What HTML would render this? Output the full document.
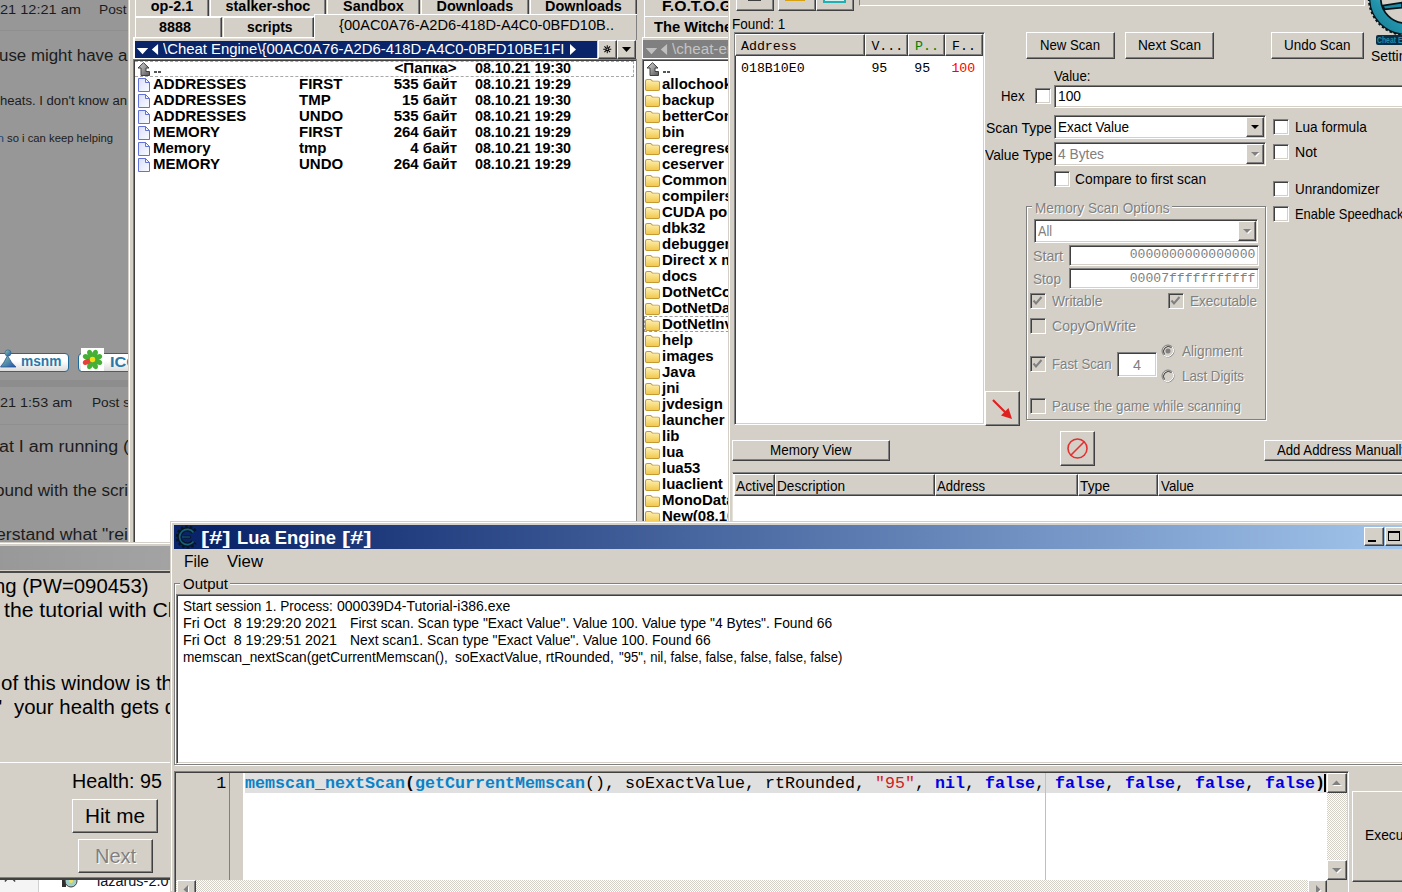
<!DOCTYPE html>
<html><head><meta charset="utf-8"><title>screenshot</title>
<style>
html,body{margin:0;padding:0}
body{width:1402px;height:892px;overflow:hidden;position:relative;background:#d4d0c8;font-family:"Liberation Sans",sans-serif;color:#000}
div{position:absolute;box-sizing:border-box}
.t{position:absolute;white-space:pre;display:block}
.s{font-family:"Liberation Sans",sans-serif}
.f{font-family:"Liberation Serif",serif}
.m{font-family:"Liberation Mono",monospace}
.b{font-weight:bold}
.clip{overflow:hidden}
.face{background:#d4d0c8}
.white{background:#fff}
.raised{background:#d4d0c8;border:1px solid;border-color:#fff #404040 #404040 #fff;box-shadow:inset -1px -1px 0 #808080,inset 1px 1px 0 #d4d0c8}
.sunken{border:1px solid;border-color:#808080 #fff #fff #808080;box-shadow:inset 1px 1px 0 #404040,inset -1px -1px 0 #d4d0c8}
.sunkw{background:#fff}
.cb{background:#fff;border:1px solid;border-color:#808080 #fff #fff #808080;box-shadow:inset 1px 1px 0 #404040,inset -1px -1px 0 #d4d0c8}
.cbd{background:#d4d0c8}
.dis{color:#808080;text-shadow:1px 1px 0 #fff}
.grp{border:1px solid #808080;box-shadow:1px 1px 0 #fff,inset 1px 1px 0 #fff}
.hdr{background:#d4d0c8;border:1px solid;border-color:#fff #404040 #404040 #fff;box-shadow:inset -1px -1px 0 #808080}
svg{position:absolute;overflow:visible}

</style></head>
<body>
<div class="clip" style="left:0;top:0;width:128px;height:542px;background:#979797;color:#1c1c1c">
<div style="left:0;top:30px;width:128px;height:1px;background:#8f8f8f"></div>
<div style="left:0;top:380px;width:128px;height:7px;background:#8d8d8d"></div>
<div style="left:0;top:424px;width:128px;height:1px;background:#8f8f8f"></div>
<span class="t s" style="top:4.23px;font-size:12.6px;line-height:12.6px;left:0.00px;transform:scaleX(1.1563);transform-origin:0 0;">21 12:21 am</span>
<span class="t s" style="top:4.23px;font-size:12.6px;line-height:12.6px;left:99.00px;transform:scaleX(1.0907);transform-origin:0 0;">Post</span>
<span class="t s" style="top:48.46px;font-size:16px;line-height:16px;left:-1.50px;transform:scaleX(1.0545);transform-origin:0 0;">use might have a</span>
<span class="t s" style="top:94.59px;font-size:12.3px;line-height:12.3px;left:0.00px;transform:scaleX(1.0647);transform-origin:0 0;">heats. I don't know an</span>
<span class="t s" style="top:133.36px;font-size:10.8px;line-height:10.8px;left:-3.00px;transform:scaleX(1.1654);transform-origin:0 0;color:#1d4a7a;">n</span>
<span class="t s" style="top:133.36px;font-size:10.8px;line-height:10.8px;left:7.00px;transform:scaleX(1.0446);transform-origin:0 0;">so i can keep helping</span>
<div style="left:-6px;top:353px;width:75px;height:19px;background:linear-gradient(#fff 40%,#dcdcdc);border:1.5px solid #1f6a9a;border-radius:4px"></div>
<svg style="left:0px;top:349px" width="17" height="19" viewBox="0 0 17 19"><defs><linearGradient id="mg" x1="0" y1="0" x2="1" y2="1"><stop offset="0" stop-color="#8fd0a0"/><stop offset="1" stop-color="#1f4fb0"/></linearGradient></defs><path d="M0.5 18 Q4 14 7.5 6.5 Q11 14 16 18 Z" fill="url(#mg)" stroke="#25579a" stroke-width="0.8"/><circle cx="8" cy="4" r="3.1" fill="url(#mg)" stroke="#2a5f8e" stroke-width="0.6"/></svg>
<span class="t s b" style="top:354.13px;font-size:14.5px;line-height:14.5px;left:21.30px;transform:scaleX(0.9460);transform-origin:0 0;color:#2a78a8;">msnm</span>
<div style="left:78px;top:353px;width:70px;height:19px;background:linear-gradient(#fff 40%,#dcdcdc);border:1.5px solid #1f6a9a;border-radius:4px"></div>
<div style="left:81px;top:348px;width:23px;height:23px;background:#fff"></div>
<svg style="left:81.7px;top:349px" width="21" height="21" viewBox="-10.5 -10.5 21 21"><g transform="rotate(22.5)"><g fill="#45b035"><g transform="rotate(0)"><ellipse cx="0" cy="-6.2" rx="2.7" ry="4.1"/></g><g transform="rotate(45)"><ellipse cx="0" cy="-6.2" rx="2.7" ry="4.1"/></g><g transform="rotate(90)"><ellipse cx="0" cy="-6.2" rx="2.7" ry="4.1"/></g><g transform="rotate(135)"><ellipse cx="0" cy="-6.2" rx="2.7" ry="4.1"/></g><g transform="rotate(180)"><ellipse cx="0" cy="-6.2" rx="2.7" ry="4.1"/></g><g transform="rotate(270)"><ellipse cx="0" cy="-6.2" rx="2.7" ry="4.1"/></g><g transform="rotate(315)"><ellipse cx="0" cy="-6.2" rx="2.7" ry="4.1"/></g></g><g transform="rotate(225)" fill="#e8403a"><ellipse cx="0" cy="-6.2" rx="2.7" ry="4.1"/></g></g><circle r="2.7" fill="#f7dc1a"/></svg>
<span class="t s b" style="top:354.73px;font-size:14.5px;line-height:14.5px;left:110.00px;transform:scaleX(1.1250);transform-origin:0 0;color:#2a78a8;">ICQ</span>
<span class="t s" style="top:396.93px;font-size:12.6px;line-height:12.6px;left:0.00px;transform:scaleX(1.1468);transform-origin:0 0;">21 1:53 am</span>
<span class="t s" style="top:396.93px;font-size:12.6px;line-height:12.6px;left:92.00px;transform:scaleX(1.0853);transform-origin:0 0;">Post s</span>
<span class="t s" style="top:439.46px;font-size:16px;line-height:16px;left:-0.70px;transform:scaleX(1.1159);transform-origin:0 0;">at I am running (</span>
<span class="t s" style="top:483.46px;font-size:16px;line-height:16px;left:-5.00px;transform:scaleX(1.0682);transform-origin:0 0;">ound with the scri</span>
<span class="t s" style="top:527.46px;font-size:16px;line-height:16px;left:-4.00px;transform:scaleX(1.1044);transform-origin:0 0;">erstand what "rei</span>
</div>
<div class="clip face" style="left:128px;top:0;width:602px;height:545px">
<div style="left:1px;top:0;width:1px;height:545px;background:#fff"></div>
<div style="left:7px;top:-6px;width:74px;height:22px;background:#d4d0c8;border-left:1px solid #fff;border-top:1px solid #fff;border-right:1px solid #404040;box-shadow:inset -1px 0 0 #808080"></div>
<span class="t s b" style="top:-1.39px;font-size:14.4px;line-height:14.4px;left:22.80px;">op-2.1</span>
<div style="left:82px;top:-6px;width:116px;height:22px;background:#d4d0c8;border-left:1px solid #fff;border-top:1px solid #fff;border-right:1px solid #404040;box-shadow:inset -1px 0 0 #808080"></div>
<span class="t s b" style="top:-1.39px;font-size:14.4px;line-height:14.4px;left:97.58px;">stalker-shoc</span>
<div style="left:199px;top:-6px;width:93px;height:22px;background:#d4d0c8;border-left:1px solid #fff;border-top:1px solid #fff;border-right:1px solid #404040;box-shadow:inset -1px 0 0 #808080"></div>
<span class="t s b" style="top:-1.39px;font-size:14.4px;line-height:14.4px;left:215.10px;">Sandbox</span>
<div style="left:293px;top:-6px;width:108px;height:22px;background:#d4d0c8;border-left:1px solid #fff;border-top:1px solid #fff;border-right:1px solid #404040;box-shadow:inset -1px 0 0 #808080"></div>
<span class="t s b" style="top:-1.39px;font-size:14.4px;line-height:14.4px;left:308.60px;">Downloads</span>
<div style="left:402px;top:-6px;width:107px;height:22px;background:#d4d0c8;border-left:1px solid #fff;border-top:1px solid #fff;border-right:1px solid #404040;box-shadow:inset -1px 0 0 #808080"></div>
<span class="t s b" style="top:-1.39px;font-size:14.4px;line-height:14.4px;left:417.10px;">Downloads</span>
<div style="left:7px;top:16px;width:502px;height:1px;background:#fff"></div>
<div style="left:7px;top:17px;width:87px;height:21px;background:#d4d0c8;border-left:1px solid #fff;border-top:1px solid #fff;border-right:1px solid #404040;box-shadow:inset -1px 0 0 #808080"></div>
<span class="t s b" style="top:19.30px;font-size:15px;line-height:15px;left:30.70px;transform:scaleX(0.9589);transform-origin:0 0;">8888</span>
<div style="left:95px;top:17px;width:91px;height:21px;background:#d4d0c8;border-left:1px solid #fff;border-top:1px solid #fff;border-right:1px solid #404040;box-shadow:inset -1px 0 0 #808080"></div>
<span class="t s b" style="top:19.30px;font-size:15px;line-height:15px;left:119.00px;transform:scaleX(0.9250);transform-origin:0 0;">scripts</span>
<div style="left:186px;top:14px;width:324px;height:26px;background:#d4d0c8;border-left:1px solid #fff;border-top:1px solid #fff;border-right:1px solid #404040;box-shadow:inset -1px 0 0 #808080"></div>
<span class="t s" style="top:17.30px;font-size:15px;line-height:15px;left:211.00px;transform:scaleX(0.9758);transform-origin:0 0;">{00AC0A76-A2D6-418D-A4C0-0BFD10B..</span>
<div style="left:5px;top:37px;width:182px;height:1px;background:#fff"></div>
<div style="left:5px;top:38px;width:182px;height:1px;background:#e6e3dd"></div>
<div style="left:5px;top:37px;width:2px;height:22px;background:#fff"></div>
<div style="left:5px;top:58px;width:465px;height:1px;background:#fff"></div>
<div style="left:7px;top:41px;width:462px;height:17px;background:#0a246a"></div>
<svg style="left:8px;top:41px" width="30" height="17" viewBox="0 0 30 17"><path d="M0.8 6.9 L12.2 6.9 L6.5 13.2 Z M15.8 8.5 L22.1 2.9 L22.1 14.1 Z" fill="#fff"/></svg>
<span class="t s" style="top:41.30px;font-size:15px;line-height:15px;left:35.20px;transform:scaleX(0.9928);transform-origin:0 0;color:#fff;">\Cheat Engine\{00AC0A76-A2D6-418D-A4C0-0BFD10BE1FI</span>
<svg style="left:440px;top:41px" width="12" height="17" viewBox="0 0 12 17"><path d="M2 3 L8 8.5 L2 14 Z" fill="#fff"/></svg>
<div class="raised" style="left:470px;top:40px;width:19px;height:19px"></div>
<svg style="left:475.29999999999995px;top:45.3px" width="8.5" height="8.5" viewBox="0 0 10 10"><path d="M5 0.3 L5 9.7 M0.3 5 L9.7 5 M1.7 1.7 L8.3 8.3 M8.3 1.7 L1.7 8.3" stroke="#000" stroke-width="1.2" fill="none"/><circle cx="5" cy="5" r="0.9" fill="#d4d0c8"/></svg>
<div class="raised" style="left:489px;top:40px;width:19px;height:19px"></div>
<svg style="left:489px;top:40px" width="19" height="19" viewBox="0 0 19 19"><path d="M5 7 L14 7 L9.5 12 Z" fill="#000"/></svg>
<div style="left:5px;top:59px;width:504px;height:490px;background:#fff;border:1px solid #808080;box-shadow:inset 1px 1px 0 #404040"></div>
<div style="left:7px;top:61px;width:499px;height:16px;border-top:1px dashed #a8a8a8;border-bottom:1px dashed #a8a8a8;border-right:1px dashed #a8a8a8"></div>
<svg style="left:9px;top:62px" width="14" height="14" viewBox="0 0 14 14"><defs><linearGradient id="ug" x1="0" y1="0" x2="1" y2="1"><stop offset="0" stop-color="#d8d8d8"/><stop offset="1" stop-color="#585858"/></linearGradient></defs><path d="M6.5 0.7 L12 6 L9 6 L9 9.5 L12.5 9.5 L12.5 13.5 L4 13.5 L4 6 L1 6 Z" fill="url(#ug)" stroke="#404040" stroke-width="1"/></svg>
<div style="left:26px;top:71px;width:3px;height:2px;background:#555"></div><div style="left:30.400000000000006px;top:71px;width:3px;height:2px;background:#555"></div>
<span class="t s b" style="top:60.30px;font-size:15px;line-height:15px;left:267.45px;transform:scaleX(1.0073);transform-origin:100% 0;">&lt;Папка&gt;</span>
<span class="t s b" style="top:60.30px;font-size:15px;line-height:15px;left:347.00px;transform:scaleX(0.9512);transform-origin:0 0;">08.10.21 19:30</span>
<svg style="left:10px;top:78px" width="12" height="14" viewBox="0 0 12 14"><defs><linearGradient id="fi" x1="0" y1="0" x2="1" y2="1"><stop offset="0" stop-color="#d9dffa"/><stop offset="1" stop-color="#fbfbff"/></linearGradient></defs><path d="M0.5 0.5 L7.5 0.5 L11.5 4.5 L11.5 13.5 L0.5 13.5 Z" fill="url(#fi)" stroke="#6272d8" stroke-width="1"/><path d="M7.5 0.5 L7.5 4.5 L11.5 4.5 Z" fill="#f4f6ff" stroke="#6272d8" stroke-width="1"/></svg>
<span class="t s b" style="top:76.30px;font-size:15px;line-height:15px;left:25.00px;">ADDRESSES</span>
<span class="t s b" style="top:76.30px;font-size:15px;line-height:15px;left:171.00px;">FIRST</span>
<span class="t s b" style="top:76.30px;font-size:15px;line-height:15px;left:265.63px;">535 байт</span>
<span class="t s b" style="top:76.30px;font-size:15px;line-height:15px;left:347.00px;transform:scaleX(0.9512);transform-origin:0 0;">08.10.21 19:29</span>
<svg style="left:10px;top:94px" width="12" height="14" viewBox="0 0 12 14"><defs><linearGradient id="fi" x1="0" y1="0" x2="1" y2="1"><stop offset="0" stop-color="#d9dffa"/><stop offset="1" stop-color="#fbfbff"/></linearGradient></defs><path d="M0.5 0.5 L7.5 0.5 L11.5 4.5 L11.5 13.5 L0.5 13.5 Z" fill="url(#fi)" stroke="#6272d8" stroke-width="1"/><path d="M7.5 0.5 L7.5 4.5 L11.5 4.5 Z" fill="#f4f6ff" stroke="#6272d8" stroke-width="1"/></svg>
<span class="t s b" style="top:92.30px;font-size:15px;line-height:15px;left:25.00px;">ADDRESSES</span>
<span class="t s b" style="top:92.30px;font-size:15px;line-height:15px;left:171.00px;">TMP</span>
<span class="t s b" style="top:92.30px;font-size:15px;line-height:15px;left:273.97px;">15 байт</span>
<span class="t s b" style="top:92.30px;font-size:15px;line-height:15px;left:347.00px;transform:scaleX(0.9512);transform-origin:0 0;">08.10.21 19:30</span>
<svg style="left:10px;top:110px" width="12" height="14" viewBox="0 0 12 14"><defs><linearGradient id="fi" x1="0" y1="0" x2="1" y2="1"><stop offset="0" stop-color="#d9dffa"/><stop offset="1" stop-color="#fbfbff"/></linearGradient></defs><path d="M0.5 0.5 L7.5 0.5 L11.5 4.5 L11.5 13.5 L0.5 13.5 Z" fill="url(#fi)" stroke="#6272d8" stroke-width="1"/><path d="M7.5 0.5 L7.5 4.5 L11.5 4.5 Z" fill="#f4f6ff" stroke="#6272d8" stroke-width="1"/></svg>
<span class="t s b" style="top:108.30px;font-size:15px;line-height:15px;left:25.00px;">ADDRESSES</span>
<span class="t s b" style="top:108.30px;font-size:15px;line-height:15px;left:171.00px;">UNDO</span>
<span class="t s b" style="top:108.30px;font-size:15px;line-height:15px;left:265.63px;">535 байт</span>
<span class="t s b" style="top:108.30px;font-size:15px;line-height:15px;left:347.00px;transform:scaleX(0.9512);transform-origin:0 0;">08.10.21 19:29</span>
<svg style="left:10px;top:126px" width="12" height="14" viewBox="0 0 12 14"><defs><linearGradient id="fi" x1="0" y1="0" x2="1" y2="1"><stop offset="0" stop-color="#d9dffa"/><stop offset="1" stop-color="#fbfbff"/></linearGradient></defs><path d="M0.5 0.5 L7.5 0.5 L11.5 4.5 L11.5 13.5 L0.5 13.5 Z" fill="url(#fi)" stroke="#6272d8" stroke-width="1"/><path d="M7.5 0.5 L7.5 4.5 L11.5 4.5 Z" fill="#f4f6ff" stroke="#6272d8" stroke-width="1"/></svg>
<span class="t s b" style="top:124.30px;font-size:15px;line-height:15px;left:25.00px;">MEMORY</span>
<span class="t s b" style="top:124.30px;font-size:15px;line-height:15px;left:171.00px;">FIRST</span>
<span class="t s b" style="top:124.30px;font-size:15px;line-height:15px;left:265.63px;">264 байт</span>
<span class="t s b" style="top:124.30px;font-size:15px;line-height:15px;left:347.00px;transform:scaleX(0.9512);transform-origin:0 0;">08.10.21 19:29</span>
<svg style="left:10px;top:142px" width="12" height="14" viewBox="0 0 12 14"><defs><linearGradient id="fi" x1="0" y1="0" x2="1" y2="1"><stop offset="0" stop-color="#d9dffa"/><stop offset="1" stop-color="#fbfbff"/></linearGradient></defs><path d="M0.5 0.5 L7.5 0.5 L11.5 4.5 L11.5 13.5 L0.5 13.5 Z" fill="url(#fi)" stroke="#6272d8" stroke-width="1"/><path d="M7.5 0.5 L7.5 4.5 L11.5 4.5 Z" fill="#f4f6ff" stroke="#6272d8" stroke-width="1"/></svg>
<span class="t s b" style="top:140.30px;font-size:15px;line-height:15px;left:25.00px;">Memory</span>
<span class="t s b" style="top:140.30px;font-size:15px;line-height:15px;left:171.00px;">tmp</span>
<span class="t s b" style="top:140.30px;font-size:15px;line-height:15px;left:282.31px;">4 байт</span>
<span class="t s b" style="top:140.30px;font-size:15px;line-height:15px;left:347.00px;transform:scaleX(0.9512);transform-origin:0 0;">08.10.21 19:30</span>
<svg style="left:10px;top:158px" width="12" height="14" viewBox="0 0 12 14"><defs><linearGradient id="fi" x1="0" y1="0" x2="1" y2="1"><stop offset="0" stop-color="#d9dffa"/><stop offset="1" stop-color="#fbfbff"/></linearGradient></defs><path d="M0.5 0.5 L7.5 0.5 L11.5 4.5 L11.5 13.5 L0.5 13.5 Z" fill="url(#fi)" stroke="#6272d8" stroke-width="1"/><path d="M7.5 0.5 L7.5 4.5 L11.5 4.5 Z" fill="#f4f6ff" stroke="#6272d8" stroke-width="1"/></svg>
<span class="t s b" style="top:156.30px;font-size:15px;line-height:15px;left:25.00px;">MEMORY</span>
<span class="t s b" style="top:156.30px;font-size:15px;line-height:15px;left:171.00px;">UNDO</span>
<span class="t s b" style="top:156.30px;font-size:15px;line-height:15px;left:265.63px;">264 байт</span>
<span class="t s b" style="top:156.30px;font-size:15px;line-height:15px;left:347.00px;transform:scaleX(0.9512);transform-origin:0 0;">08.10.21 19:29</span>
<div style="left:509px;top:0;width:6px;height:545px;background:#d4d0c8"></div>
<div style="left:514px;top:37px;width:100px;height:1px;background:#fff"></div>
<div style="left:514px;top:37px;width:1px;height:22px;background:#fff"></div>
<div style="left:514px;top:58px;width:100px;height:1px;background:#fff"></div>
<div style="left:516px;top:-6px;width:96px;height:22px;background:#d4d0c8;border-left:1px solid #fff;border-top:1px solid #fff;border-right:1px solid #404040;box-shadow:inset -1px 0 0 #808080"></div>
<span class="t s b" style="top:-1.70px;font-size:15px;line-height:15px;left:534.00px;transform:scaleX(1.0499);transform-origin:0 0;">F.O.T.O.G</span>
<div style="left:516px;top:16px;width:90px;height:1px;background:#fff"></div>
<div style="left:516px;top:17px;width:1px;height:21px;background:#fff"></div>
<span class="t s b" style="top:19.30px;font-size:15px;line-height:15px;left:526.00px;transform:scaleX(0.9801);transform-origin:0 0;">The Witcher</span>
<div style="left:515px;top:40px;width:90px;height:18px;background:#808080"></div>
<svg style="left:517px;top:41px" width="30" height="17" viewBox="0 0 30 17"><path d="M0.8 6.9 L12.2 6.9 L6.5 13.2 Z M15.8 8.5 L22.1 2.9 L22.1 14.1 Z" fill="#c0c0c0"/></svg>
<span class="t s" style="top:41.30px;font-size:15px;line-height:15px;left:544.00px;transform:scaleX(1.0121);transform-origin:0 0;color:#c4c4c4;">\cheat-engine</span>
<div style="left:514px;top:59px;width:100px;height:490px;background:#fff;border:1px solid #808080;box-shadow:inset 1px 1px 0 #404040"></div>
<svg style="left:518px;top:62px" width="14" height="14" viewBox="0 0 14 14"><defs><linearGradient id="ug" x1="0" y1="0" x2="1" y2="1"><stop offset="0" stop-color="#d8d8d8"/><stop offset="1" stop-color="#585858"/></linearGradient></defs><path d="M6.5 0.7 L12 6 L9 6 L9 9.5 L12.5 9.5 L12.5 13.5 L4 13.5 L4 6 L1 6 Z" fill="url(#ug)" stroke="#404040" stroke-width="1"/></svg>
<div style="left:535px;top:71px;width:3px;height:2px;background:#555"></div><div style="left:539.4px;top:71px;width:3px;height:2px;background:#555"></div>
<svg style="left:517.3px;top:78.5px" width="15" height="12" viewBox="0 0 16 14" preserveAspectRatio="none"><defs><linearGradient id="fg" x1="0" y1="0" x2="0" y2="1"><stop offset="0" stop-color="#fdf2b8"/><stop offset="1" stop-color="#f3c646"/></linearGradient></defs><path d="M0.5 2.5 Q0.5 0.5 2.5 0.5 L6 0.5 L8 2.5 L14 2.5 Q15.5 2.5 15.5 4 L15.5 12 Q15.5 13.5 14 13.5 L2 13.5 Q0.5 13.5 0.5 12 Z" fill="url(#fg)" stroke="#c39a35" stroke-width="1.1"/></svg>
<span class="t s b" style="top:76.30px;font-size:15px;line-height:15px;left:534.00px;">allochook</span>
<svg style="left:517.3px;top:94.5px" width="15" height="12" viewBox="0 0 16 14" preserveAspectRatio="none"><defs><linearGradient id="fg" x1="0" y1="0" x2="0" y2="1"><stop offset="0" stop-color="#fdf2b8"/><stop offset="1" stop-color="#f3c646"/></linearGradient></defs><path d="M0.5 2.5 Q0.5 0.5 2.5 0.5 L6 0.5 L8 2.5 L14 2.5 Q15.5 2.5 15.5 4 L15.5 12 Q15.5 13.5 14 13.5 L2 13.5 Q0.5 13.5 0.5 12 Z" fill="url(#fg)" stroke="#c39a35" stroke-width="1.1"/></svg>
<span class="t s b" style="top:92.30px;font-size:15px;line-height:15px;left:534.00px;">backup</span>
<svg style="left:517.3px;top:110.5px" width="15" height="12" viewBox="0 0 16 14" preserveAspectRatio="none"><defs><linearGradient id="fg" x1="0" y1="0" x2="0" y2="1"><stop offset="0" stop-color="#fdf2b8"/><stop offset="1" stop-color="#f3c646"/></linearGradient></defs><path d="M0.5 2.5 Q0.5 0.5 2.5 0.5 L6 0.5 L8 2.5 L14 2.5 Q15.5 2.5 15.5 4 L15.5 12 Q15.5 13.5 14 13.5 L2 13.5 Q0.5 13.5 0.5 12 Z" fill="url(#fg)" stroke="#c39a35" stroke-width="1.1"/></svg>
<span class="t s b" style="top:108.30px;font-size:15px;line-height:15px;left:534.00px;">betterCon</span>
<svg style="left:517.3px;top:126.5px" width="15" height="12" viewBox="0 0 16 14" preserveAspectRatio="none"><defs><linearGradient id="fg" x1="0" y1="0" x2="0" y2="1"><stop offset="0" stop-color="#fdf2b8"/><stop offset="1" stop-color="#f3c646"/></linearGradient></defs><path d="M0.5 2.5 Q0.5 0.5 2.5 0.5 L6 0.5 L8 2.5 L14 2.5 Q15.5 2.5 15.5 4 L15.5 12 Q15.5 13.5 14 13.5 L2 13.5 Q0.5 13.5 0.5 12 Z" fill="url(#fg)" stroke="#c39a35" stroke-width="1.1"/></svg>
<span class="t s b" style="top:124.30px;font-size:15px;line-height:15px;left:534.00px;">bin</span>
<svg style="left:517.3px;top:142.5px" width="15" height="12" viewBox="0 0 16 14" preserveAspectRatio="none"><defs><linearGradient id="fg" x1="0" y1="0" x2="0" y2="1"><stop offset="0" stop-color="#fdf2b8"/><stop offset="1" stop-color="#f3c646"/></linearGradient></defs><path d="M0.5 2.5 Q0.5 0.5 2.5 0.5 L6 0.5 L8 2.5 L14 2.5 Q15.5 2.5 15.5 4 L15.5 12 Q15.5 13.5 14 13.5 L2 13.5 Q0.5 13.5 0.5 12 Z" fill="url(#fg)" stroke="#c39a35" stroke-width="1.1"/></svg>
<span class="t s b" style="top:140.30px;font-size:15px;line-height:15px;left:534.00px;">ceregrese</span>
<svg style="left:517.3px;top:158.5px" width="15" height="12" viewBox="0 0 16 14" preserveAspectRatio="none"><defs><linearGradient id="fg" x1="0" y1="0" x2="0" y2="1"><stop offset="0" stop-color="#fdf2b8"/><stop offset="1" stop-color="#f3c646"/></linearGradient></defs><path d="M0.5 2.5 Q0.5 0.5 2.5 0.5 L6 0.5 L8 2.5 L14 2.5 Q15.5 2.5 15.5 4 L15.5 12 Q15.5 13.5 14 13.5 L2 13.5 Q0.5 13.5 0.5 12 Z" fill="url(#fg)" stroke="#c39a35" stroke-width="1.1"/></svg>
<span class="t s b" style="top:156.30px;font-size:15px;line-height:15px;left:534.00px;">ceserver</span>
<svg style="left:517.3px;top:174.5px" width="15" height="12" viewBox="0 0 16 14" preserveAspectRatio="none"><defs><linearGradient id="fg" x1="0" y1="0" x2="0" y2="1"><stop offset="0" stop-color="#fdf2b8"/><stop offset="1" stop-color="#f3c646"/></linearGradient></defs><path d="M0.5 2.5 Q0.5 0.5 2.5 0.5 L6 0.5 L8 2.5 L14 2.5 Q15.5 2.5 15.5 4 L15.5 12 Q15.5 13.5 14 13.5 L2 13.5 Q0.5 13.5 0.5 12 Z" fill="url(#fg)" stroke="#c39a35" stroke-width="1.1"/></svg>
<span class="t s b" style="top:172.30px;font-size:15px;line-height:15px;left:534.00px;">Common</span>
<svg style="left:517.3px;top:190.5px" width="15" height="12" viewBox="0 0 16 14" preserveAspectRatio="none"><defs><linearGradient id="fg" x1="0" y1="0" x2="0" y2="1"><stop offset="0" stop-color="#fdf2b8"/><stop offset="1" stop-color="#f3c646"/></linearGradient></defs><path d="M0.5 2.5 Q0.5 0.5 2.5 0.5 L6 0.5 L8 2.5 L14 2.5 Q15.5 2.5 15.5 4 L15.5 12 Q15.5 13.5 14 13.5 L2 13.5 Q0.5 13.5 0.5 12 Z" fill="url(#fg)" stroke="#c39a35" stroke-width="1.1"/></svg>
<span class="t s b" style="top:188.30px;font-size:15px;line-height:15px;left:534.00px;">compilers</span>
<svg style="left:517.3px;top:206.5px" width="15" height="12" viewBox="0 0 16 14" preserveAspectRatio="none"><defs><linearGradient id="fg" x1="0" y1="0" x2="0" y2="1"><stop offset="0" stop-color="#fdf2b8"/><stop offset="1" stop-color="#f3c646"/></linearGradient></defs><path d="M0.5 2.5 Q0.5 0.5 2.5 0.5 L6 0.5 L8 2.5 L14 2.5 Q15.5 2.5 15.5 4 L15.5 12 Q15.5 13.5 14 13.5 L2 13.5 Q0.5 13.5 0.5 12 Z" fill="url(#fg)" stroke="#c39a35" stroke-width="1.1"/></svg>
<span class="t s b" style="top:204.30px;font-size:15px;line-height:15px;left:534.00px;">CUDA poi</span>
<svg style="left:517.3px;top:222.5px" width="15" height="12" viewBox="0 0 16 14" preserveAspectRatio="none"><defs><linearGradient id="fg" x1="0" y1="0" x2="0" y2="1"><stop offset="0" stop-color="#fdf2b8"/><stop offset="1" stop-color="#f3c646"/></linearGradient></defs><path d="M0.5 2.5 Q0.5 0.5 2.5 0.5 L6 0.5 L8 2.5 L14 2.5 Q15.5 2.5 15.5 4 L15.5 12 Q15.5 13.5 14 13.5 L2 13.5 Q0.5 13.5 0.5 12 Z" fill="url(#fg)" stroke="#c39a35" stroke-width="1.1"/></svg>
<span class="t s b" style="top:220.30px;font-size:15px;line-height:15px;left:534.00px;">dbk32</span>
<svg style="left:517.3px;top:238.5px" width="15" height="12" viewBox="0 0 16 14" preserveAspectRatio="none"><defs><linearGradient id="fg" x1="0" y1="0" x2="0" y2="1"><stop offset="0" stop-color="#fdf2b8"/><stop offset="1" stop-color="#f3c646"/></linearGradient></defs><path d="M0.5 2.5 Q0.5 0.5 2.5 0.5 L6 0.5 L8 2.5 L14 2.5 Q15.5 2.5 15.5 4 L15.5 12 Q15.5 13.5 14 13.5 L2 13.5 Q0.5 13.5 0.5 12 Z" fill="url(#fg)" stroke="#c39a35" stroke-width="1.1"/></svg>
<span class="t s b" style="top:236.30px;font-size:15px;line-height:15px;left:534.00px;">debugger</span>
<svg style="left:517.3px;top:254.5px" width="15" height="12" viewBox="0 0 16 14" preserveAspectRatio="none"><defs><linearGradient id="fg" x1="0" y1="0" x2="0" y2="1"><stop offset="0" stop-color="#fdf2b8"/><stop offset="1" stop-color="#f3c646"/></linearGradient></defs><path d="M0.5 2.5 Q0.5 0.5 2.5 0.5 L6 0.5 L8 2.5 L14 2.5 Q15.5 2.5 15.5 4 L15.5 12 Q15.5 13.5 14 13.5 L2 13.5 Q0.5 13.5 0.5 12 Z" fill="url(#fg)" stroke="#c39a35" stroke-width="1.1"/></svg>
<span class="t s b" style="top:252.30px;font-size:15px;line-height:15px;left:534.00px;">Direct x m</span>
<svg style="left:517.3px;top:270.5px" width="15" height="12" viewBox="0 0 16 14" preserveAspectRatio="none"><defs><linearGradient id="fg" x1="0" y1="0" x2="0" y2="1"><stop offset="0" stop-color="#fdf2b8"/><stop offset="1" stop-color="#f3c646"/></linearGradient></defs><path d="M0.5 2.5 Q0.5 0.5 2.5 0.5 L6 0.5 L8 2.5 L14 2.5 Q15.5 2.5 15.5 4 L15.5 12 Q15.5 13.5 14 13.5 L2 13.5 Q0.5 13.5 0.5 12 Z" fill="url(#fg)" stroke="#c39a35" stroke-width="1.1"/></svg>
<span class="t s b" style="top:268.30px;font-size:15px;line-height:15px;left:534.00px;">docs</span>
<svg style="left:517.3px;top:286.5px" width="15" height="12" viewBox="0 0 16 14" preserveAspectRatio="none"><defs><linearGradient id="fg" x1="0" y1="0" x2="0" y2="1"><stop offset="0" stop-color="#fdf2b8"/><stop offset="1" stop-color="#f3c646"/></linearGradient></defs><path d="M0.5 2.5 Q0.5 0.5 2.5 0.5 L6 0.5 L8 2.5 L14 2.5 Q15.5 2.5 15.5 4 L15.5 12 Q15.5 13.5 14 13.5 L2 13.5 Q0.5 13.5 0.5 12 Z" fill="url(#fg)" stroke="#c39a35" stroke-width="1.1"/></svg>
<span class="t s b" style="top:284.30px;font-size:15px;line-height:15px;left:534.00px;">DotNetCo</span>
<svg style="left:517.3px;top:302.5px" width="15" height="12" viewBox="0 0 16 14" preserveAspectRatio="none"><defs><linearGradient id="fg" x1="0" y1="0" x2="0" y2="1"><stop offset="0" stop-color="#fdf2b8"/><stop offset="1" stop-color="#f3c646"/></linearGradient></defs><path d="M0.5 2.5 Q0.5 0.5 2.5 0.5 L6 0.5 L8 2.5 L14 2.5 Q15.5 2.5 15.5 4 L15.5 12 Q15.5 13.5 14 13.5 L2 13.5 Q0.5 13.5 0.5 12 Z" fill="url(#fg)" stroke="#c39a35" stroke-width="1.1"/></svg>
<span class="t s b" style="top:300.30px;font-size:15px;line-height:15px;left:534.00px;">DotNetDa</span>
<svg style="left:517.3px;top:318.5px" width="15" height="12" viewBox="0 0 16 14" preserveAspectRatio="none"><defs><linearGradient id="fg" x1="0" y1="0" x2="0" y2="1"><stop offset="0" stop-color="#fdf2b8"/><stop offset="1" stop-color="#f3c646"/></linearGradient></defs><path d="M0.5 2.5 Q0.5 0.5 2.5 0.5 L6 0.5 L8 2.5 L14 2.5 Q15.5 2.5 15.5 4 L15.5 12 Q15.5 13.5 14 13.5 L2 13.5 Q0.5 13.5 0.5 12 Z" fill="url(#fg)" stroke="#c39a35" stroke-width="1.1"/></svg>
<span class="t s b" style="top:316.30px;font-size:15px;line-height:15px;left:534.00px;">DotNetInv</span>
<svg style="left:517.3px;top:334.5px" width="15" height="12" viewBox="0 0 16 14" preserveAspectRatio="none"><defs><linearGradient id="fg" x1="0" y1="0" x2="0" y2="1"><stop offset="0" stop-color="#fdf2b8"/><stop offset="1" stop-color="#f3c646"/></linearGradient></defs><path d="M0.5 2.5 Q0.5 0.5 2.5 0.5 L6 0.5 L8 2.5 L14 2.5 Q15.5 2.5 15.5 4 L15.5 12 Q15.5 13.5 14 13.5 L2 13.5 Q0.5 13.5 0.5 12 Z" fill="url(#fg)" stroke="#c39a35" stroke-width="1.1"/></svg>
<span class="t s b" style="top:332.30px;font-size:15px;line-height:15px;left:534.00px;">help</span>
<svg style="left:517.3px;top:350.5px" width="15" height="12" viewBox="0 0 16 14" preserveAspectRatio="none"><defs><linearGradient id="fg" x1="0" y1="0" x2="0" y2="1"><stop offset="0" stop-color="#fdf2b8"/><stop offset="1" stop-color="#f3c646"/></linearGradient></defs><path d="M0.5 2.5 Q0.5 0.5 2.5 0.5 L6 0.5 L8 2.5 L14 2.5 Q15.5 2.5 15.5 4 L15.5 12 Q15.5 13.5 14 13.5 L2 13.5 Q0.5 13.5 0.5 12 Z" fill="url(#fg)" stroke="#c39a35" stroke-width="1.1"/></svg>
<span class="t s b" style="top:348.30px;font-size:15px;line-height:15px;left:534.00px;">images</span>
<svg style="left:517.3px;top:366.5px" width="15" height="12" viewBox="0 0 16 14" preserveAspectRatio="none"><defs><linearGradient id="fg" x1="0" y1="0" x2="0" y2="1"><stop offset="0" stop-color="#fdf2b8"/><stop offset="1" stop-color="#f3c646"/></linearGradient></defs><path d="M0.5 2.5 Q0.5 0.5 2.5 0.5 L6 0.5 L8 2.5 L14 2.5 Q15.5 2.5 15.5 4 L15.5 12 Q15.5 13.5 14 13.5 L2 13.5 Q0.5 13.5 0.5 12 Z" fill="url(#fg)" stroke="#c39a35" stroke-width="1.1"/></svg>
<span class="t s b" style="top:364.30px;font-size:15px;line-height:15px;left:534.00px;">Java</span>
<svg style="left:517.3px;top:382.5px" width="15" height="12" viewBox="0 0 16 14" preserveAspectRatio="none"><defs><linearGradient id="fg" x1="0" y1="0" x2="0" y2="1"><stop offset="0" stop-color="#fdf2b8"/><stop offset="1" stop-color="#f3c646"/></linearGradient></defs><path d="M0.5 2.5 Q0.5 0.5 2.5 0.5 L6 0.5 L8 2.5 L14 2.5 Q15.5 2.5 15.5 4 L15.5 12 Q15.5 13.5 14 13.5 L2 13.5 Q0.5 13.5 0.5 12 Z" fill="url(#fg)" stroke="#c39a35" stroke-width="1.1"/></svg>
<span class="t s b" style="top:380.30px;font-size:15px;line-height:15px;left:534.00px;">jni</span>
<svg style="left:517.3px;top:398.5px" width="15" height="12" viewBox="0 0 16 14" preserveAspectRatio="none"><defs><linearGradient id="fg" x1="0" y1="0" x2="0" y2="1"><stop offset="0" stop-color="#fdf2b8"/><stop offset="1" stop-color="#f3c646"/></linearGradient></defs><path d="M0.5 2.5 Q0.5 0.5 2.5 0.5 L6 0.5 L8 2.5 L14 2.5 Q15.5 2.5 15.5 4 L15.5 12 Q15.5 13.5 14 13.5 L2 13.5 Q0.5 13.5 0.5 12 Z" fill="url(#fg)" stroke="#c39a35" stroke-width="1.1"/></svg>
<span class="t s b" style="top:396.30px;font-size:15px;line-height:15px;left:534.00px;">jvdesign</span>
<svg style="left:517.3px;top:414.5px" width="15" height="12" viewBox="0 0 16 14" preserveAspectRatio="none"><defs><linearGradient id="fg" x1="0" y1="0" x2="0" y2="1"><stop offset="0" stop-color="#fdf2b8"/><stop offset="1" stop-color="#f3c646"/></linearGradient></defs><path d="M0.5 2.5 Q0.5 0.5 2.5 0.5 L6 0.5 L8 2.5 L14 2.5 Q15.5 2.5 15.5 4 L15.5 12 Q15.5 13.5 14 13.5 L2 13.5 Q0.5 13.5 0.5 12 Z" fill="url(#fg)" stroke="#c39a35" stroke-width="1.1"/></svg>
<span class="t s b" style="top:412.30px;font-size:15px;line-height:15px;left:534.00px;">launcher</span>
<svg style="left:517.3px;top:430.5px" width="15" height="12" viewBox="0 0 16 14" preserveAspectRatio="none"><defs><linearGradient id="fg" x1="0" y1="0" x2="0" y2="1"><stop offset="0" stop-color="#fdf2b8"/><stop offset="1" stop-color="#f3c646"/></linearGradient></defs><path d="M0.5 2.5 Q0.5 0.5 2.5 0.5 L6 0.5 L8 2.5 L14 2.5 Q15.5 2.5 15.5 4 L15.5 12 Q15.5 13.5 14 13.5 L2 13.5 Q0.5 13.5 0.5 12 Z" fill="url(#fg)" stroke="#c39a35" stroke-width="1.1"/></svg>
<span class="t s b" style="top:428.30px;font-size:15px;line-height:15px;left:534.00px;">lib</span>
<svg style="left:517.3px;top:446.5px" width="15" height="12" viewBox="0 0 16 14" preserveAspectRatio="none"><defs><linearGradient id="fg" x1="0" y1="0" x2="0" y2="1"><stop offset="0" stop-color="#fdf2b8"/><stop offset="1" stop-color="#f3c646"/></linearGradient></defs><path d="M0.5 2.5 Q0.5 0.5 2.5 0.5 L6 0.5 L8 2.5 L14 2.5 Q15.5 2.5 15.5 4 L15.5 12 Q15.5 13.5 14 13.5 L2 13.5 Q0.5 13.5 0.5 12 Z" fill="url(#fg)" stroke="#c39a35" stroke-width="1.1"/></svg>
<span class="t s b" style="top:444.30px;font-size:15px;line-height:15px;left:534.00px;">lua</span>
<svg style="left:517.3px;top:462.5px" width="15" height="12" viewBox="0 0 16 14" preserveAspectRatio="none"><defs><linearGradient id="fg" x1="0" y1="0" x2="0" y2="1"><stop offset="0" stop-color="#fdf2b8"/><stop offset="1" stop-color="#f3c646"/></linearGradient></defs><path d="M0.5 2.5 Q0.5 0.5 2.5 0.5 L6 0.5 L8 2.5 L14 2.5 Q15.5 2.5 15.5 4 L15.5 12 Q15.5 13.5 14 13.5 L2 13.5 Q0.5 13.5 0.5 12 Z" fill="url(#fg)" stroke="#c39a35" stroke-width="1.1"/></svg>
<span class="t s b" style="top:460.30px;font-size:15px;line-height:15px;left:534.00px;">lua53</span>
<svg style="left:517.3px;top:478.5px" width="15" height="12" viewBox="0 0 16 14" preserveAspectRatio="none"><defs><linearGradient id="fg" x1="0" y1="0" x2="0" y2="1"><stop offset="0" stop-color="#fdf2b8"/><stop offset="1" stop-color="#f3c646"/></linearGradient></defs><path d="M0.5 2.5 Q0.5 0.5 2.5 0.5 L6 0.5 L8 2.5 L14 2.5 Q15.5 2.5 15.5 4 L15.5 12 Q15.5 13.5 14 13.5 L2 13.5 Q0.5 13.5 0.5 12 Z" fill="url(#fg)" stroke="#c39a35" stroke-width="1.1"/></svg>
<span class="t s b" style="top:476.30px;font-size:15px;line-height:15px;left:534.00px;">luaclient</span>
<svg style="left:517.3px;top:494.5px" width="15" height="12" viewBox="0 0 16 14" preserveAspectRatio="none"><defs><linearGradient id="fg" x1="0" y1="0" x2="0" y2="1"><stop offset="0" stop-color="#fdf2b8"/><stop offset="1" stop-color="#f3c646"/></linearGradient></defs><path d="M0.5 2.5 Q0.5 0.5 2.5 0.5 L6 0.5 L8 2.5 L14 2.5 Q15.5 2.5 15.5 4 L15.5 12 Q15.5 13.5 14 13.5 L2 13.5 Q0.5 13.5 0.5 12 Z" fill="url(#fg)" stroke="#c39a35" stroke-width="1.1"/></svg>
<span class="t s b" style="top:492.30px;font-size:15px;line-height:15px;left:534.00px;">MonoData</span>
<svg style="left:517.3px;top:510.5px" width="15" height="12" viewBox="0 0 16 14" preserveAspectRatio="none"><defs><linearGradient id="fg" x1="0" y1="0" x2="0" y2="1"><stop offset="0" stop-color="#fdf2b8"/><stop offset="1" stop-color="#f3c646"/></linearGradient></defs><path d="M0.5 2.5 Q0.5 0.5 2.5 0.5 L6 0.5 L8 2.5 L14 2.5 Q15.5 2.5 15.5 4 L15.5 12 Q15.5 13.5 14 13.5 L2 13.5 Q0.5 13.5 0.5 12 Z" fill="url(#fg)" stroke="#c39a35" stroke-width="1.1"/></svg>
<span class="t s b" style="top:508.30px;font-size:15px;line-height:15px;left:534.00px;">New(08.10.</span>
<div style="left:516px;top:316px;width:90px;height:16px;border:1px dashed #9a9a9a;border-right:none"></div>
</div>
<div class="clip face" style="left:728px;top:0;width:674px;height:523px">
<div style="left:0;top:0;width:1px;height:523px;background:#d4d0c8"></div>
<div style="left:1px;top:0;width:1px;height:523px;background:#fff"></div>
<div class="raised" style="left:8px;top:-20px;width:38px;height:31px"></div>
<div style="left:20px;top:-6px;width:13px;height:7px;background:#404040"></div>
<div class="raised" style="left:50px;top:-20px;width:38px;height:31px"></div>
<div style="left:57px;top:-6px;width:20px;height:7px;background:#d6a212"></div>
<div class="raised" style="left:88px;top:-20px;width:38px;height:31px"></div>
<div style="left:95px;top:-7px;width:23px;height:10px;background:#d8f0f0;border:2px solid #20b0b0"></div>
<div style="left:131px;top:-20px;width:506px;height:26px;border-left:1px solid #808080;border-bottom:1px solid #fff;border-right:1px solid #fff"></div>
<span class="t s" style="top:16.30px;font-size:15px;line-height:15px;left:3.80px;transform:scaleX(0.8985);transform-origin:0 0;">Found: 1</span>
<div class="sunken sunkw" style="left:6px;top:32px;width:251px;height:393px"></div>
<div class="hdr" style="left:7px;top:34px;width:130px;height:22px"></div>
<span class="t m" style="top:40.14px;font-size:13.25px;line-height:13.25px;left:13.00px;color:#000;">Address</span>
<div class="hdr" style="left:137px;top:34px;width:43px;height:22px"></div>
<span class="t m" style="top:40.14px;font-size:13.25px;line-height:13.25px;left:143.40px;color:#000;">V...</span>
<div class="hdr" style="left:180px;top:34px;width:37px;height:22px"></div>
<span class="t m" style="top:40.14px;font-size:13.25px;line-height:13.25px;left:187.00px;color:#008000;">P..</span>
<div class="hdr" style="left:217px;top:34px;width:38px;height:22px"></div>
<span class="t m" style="top:40.14px;font-size:13.25px;line-height:13.25px;left:224.10px;color:#000;">F..</span>
<span class="t m" style="top:61.94px;font-size:13.25px;line-height:13.25px;left:13.00px;">018B10E0</span>
<span class="t m" style="top:61.94px;font-size:13.25px;line-height:13.25px;left:143.40px;">95</span>
<span class="t m" style="top:61.94px;font-size:13.25px;line-height:13.25px;left:186.30px;">95</span>
<span class="t m" style="top:61.94px;font-size:13.25px;line-height:13.25px;left:223.40px;color:#ff0000;">100</span>
<div class="raised" style="left:257px;top:391px;width:35px;height:35px"></div>
<svg style="left:257px;top:391px" width="35" height="35" viewBox="0 0 35 35"><path d="M8 9 L22 23" stroke="#e02020" stroke-width="2.2"/><path d="M27 28 L16 24.5 L23.5 17 Z" fill="#e02020"/></svg>
<div class="raised" style="left:298px;top:32px;width:89px;height:27px"></div>
<span class="t s" style="top:37.30px;font-size:15px;line-height:15px;left:312.00px;transform:scaleX(0.8776);transform-origin:0 0;">New Scan</span>
<div class="raised" style="left:397px;top:32px;width:89px;height:27px"></div>
<span class="t s" style="top:37.30px;font-size:15px;line-height:15px;left:410.00px;transform:scaleX(0.9104);transform-origin:0 0;">Next Scan</span>
<div class="raised" style="left:543px;top:32px;width:93px;height:27px"></div>
<span class="t s" style="top:37.30px;font-size:15px;line-height:15px;left:556.00px;transform:scaleX(0.8960);transform-origin:0 0;">Undo Scan</span>
<svg style="left:634px;top:0px" width="40" height="48" viewBox="1362 0 40 48"><defs><linearGradient id="lg" gradientUnits="userSpaceOnUse" x1="1370" y1="30" x2="1402" y2="-4"><stop offset="0" stop-color="#17788f"/><stop offset="0.5" stop-color="#2193ab"/><stop offset="1" stop-color="#52c4da"/></linearGradient></defs><circle cx="1406" cy="-2" r="36" fill="none" stroke="#04151c" stroke-width="4.4" stroke-dasharray="2.5 1.9"/><circle cx="1406" cy="-2" r="30.7" fill="none" stroke="#04151c" stroke-width="12.6"/><circle cx="1406" cy="-2" r="30.9" fill="none" stroke="url(#lg)" stroke-width="9.6"/><path d="M1382.6 5.6 L1402 2.6 L1402 7.6 L1384.7 9.4 Z" fill="#1c8aa2" stroke="#04151c" stroke-width="1.6"/></svg>
<div style="left:648px;top:35px;width:40px;height:10px;background:#0b2d44;border-radius:2px"></div>
<span class="t s b" style="top:35.36px;font-size:9.5px;line-height:9.5px;left:648.90px;transform:scaleX(0.7199);transform-origin:0 0;color:#1f8fa8;">Cheat Engine</span>
<span class="t s" style="top:48.00px;font-size:15px;line-height:15px;left:643.00px;transform:scaleX(0.9225);transform-origin:0 0;">Settings</span>
<span class="t s" style="top:67.80px;font-size:15px;line-height:15px;left:325.70px;transform:scaleX(0.8812);transform-origin:0 0;">Value:</span>
<span class="t s" style="top:88.30px;font-size:15px;line-height:15px;left:273.00px;transform:scaleX(0.8810);transform-origin:0 0;">Hex</span>
<div class="cb" style="left:307px;top:88px;width:16px;height:16px"></div>
<div class="sunken sunkw" style="left:326px;top:85px;width:400px;height:23px"></div>
<span class="t s" style="top:88.30px;font-size:15px;line-height:15px;left:330.00px;transform:scaleX(0.9190);transform-origin:0 0;">100</span>
<span class="t s" style="top:119.80px;font-size:15px;line-height:15px;left:258.30px;transform:scaleX(0.9333);transform-origin:0 0;">Scan Type</span>
<div class="sunken sunkw" style="left:326px;top:115px;width:212px;height:24px"></div>
<span class="t s" style="top:119.30px;font-size:15px;line-height:15px;left:330.00px;transform:scaleX(0.8995);transform-origin:0 0;">Exact Value</span>
<div class="raised" style="left:518px;top:117px;width:18px;height:20px"></div>
<svg style="left:518px;top:117px" width="18" height="20" viewBox="0 0 18 20"><path d="M5 8 L13 8 L9 12 Z" fill="#000"/></svg>
<span class="t s" style="top:146.80px;font-size:15px;line-height:15px;left:256.60px;transform:scaleX(0.9176);transform-origin:0 0;">Value Type</span>
<div class="sunken sunkw" style="left:326px;top:142px;width:212px;height:24px"></div>
<span class="t s" style="top:146.30px;font-size:15px;line-height:15px;left:330.00px;transform:scaleX(0.9195);transform-origin:0 0;color:#808080;">4 Bytes</span>
<div class="raised" style="left:518px;top:144px;width:18px;height:20px"></div>
<svg style="left:518px;top:144px" width="18" height="20" viewBox="0 0 18 20"><path d="M6 9 L14 9 L10 13 Z" fill="#fff"/><path d="M5 8 L13 8 L9 12 Z" fill="#808080"/></svg>
<div class="cb" style="left:326px;top:171px;width:16px;height:16px"></div>
<span class="t s" style="top:170.80px;font-size:15px;line-height:15px;left:347.30px;transform:scaleX(0.9204);transform-origin:0 0;">Compare to first scan</span>
<div class="cb" style="left:545px;top:119px;width:16px;height:16px"></div>
<span class="t s" style="top:118.80px;font-size:15px;line-height:15px;left:566.70px;transform:scaleX(0.9051);transform-origin:0 0;">Lua formula</span>
<div class="cb" style="left:545px;top:144px;width:16px;height:16px"></div>
<span class="t s" style="top:144.30px;font-size:15px;line-height:15px;left:566.70px;transform:scaleX(0.9382);transform-origin:0 0;">Not</span>
<div class="cb" style="left:545px;top:181px;width:16px;height:16px"></div>
<span class="t s" style="top:181.30px;font-size:15px;line-height:15px;left:566.70px;transform:scaleX(0.8959);transform-origin:0 0;">Unrandomizer</span>
<div class="cb" style="left:545px;top:206px;width:16px;height:16px"></div>
<span class="t s" style="top:206.30px;font-size:15px;line-height:15px;left:566.70px;transform:scaleX(0.8607);transform-origin:0 0;">Enable Speedhack</span>
<div class="grp" style="left:298px;top:206px;width:240px;height:214px"></div>
<div class="face" style="left:304px;top:200px;width:140px;height:15px"></div>
<span class="t s dis" style="top:200.30px;font-size:15px;line-height:15px;left:307.00px;transform:scaleX(0.9064);transform-origin:0 0;">Memory Scan Options</span>
<div class="sunken sunkw" style="left:306px;top:219px;width:224px;height:24px"></div>
<span class="t s" style="top:223.30px;font-size:15px;line-height:15px;left:310.00px;transform:scaleX(0.8398);transform-origin:0 0;color:#808080;">All</span>
<div class="raised" style="left:510px;top:221px;width:18px;height:20px"></div>
<svg style="left:510px;top:221px" width="18" height="20" viewBox="0 0 18 20"><path d="M6 9 L14 9 L10 13 Z" fill="#fff"/><path d="M5 8 L13 8 L9 12 Z" fill="#808080"/></svg>
<span class="t s dis" style="top:247.80px;font-size:15px;line-height:15px;left:305.00px;transform:scaleX(0.9470);transform-origin:0 0;">Start</span>
<div class="sunken sunkw" style="left:341px;top:245px;width:190px;height:21px"></div>
<span class="t m" style="top:248.46px;font-size:13.1px;line-height:13.1px;left:401.72px;color:#808080;">0000000000000000</span>
<span class="t s dis" style="top:271.30px;font-size:15px;line-height:15px;left:305.00px;transform:scaleX(0.9074);transform-origin:0 0;">Stop</span>
<div class="sunken sunkw" style="left:341px;top:268px;width:190px;height:21px"></div>
<span class="t m" style="top:271.96px;font-size:13.1px;line-height:13.1px;left:401.72px;color:#808080;">00007fffffffffff</span>
<div class="cb cbd" style="left:302px;top:293px;width:16px;height:16px"></div>
<svg style="left:302px;top:293px" width="16" height="16" viewBox="0 0 16 16"><path d="M3.5 7.5 L6 10.5 L11.5 4" fill="none" stroke="#808080" stroke-width="2"/></svg>
<span class="t s dis" style="top:293.30px;font-size:15px;line-height:15px;left:323.50px;transform:scaleX(0.9225);transform-origin:0 0;">Writable</span>
<div class="cb cbd" style="left:440px;top:293px;width:16px;height:16px"></div>
<svg style="left:440px;top:293px" width="16" height="16" viewBox="0 0 16 16"><path d="M3.5 7.5 L6 10.5 L11.5 4" fill="none" stroke="#808080" stroke-width="2"/></svg>
<span class="t s dis" style="top:293.30px;font-size:15px;line-height:15px;left:462.00px;transform:scaleX(0.9027);transform-origin:0 0;">Executable</span>
<div class="cb cbd" style="left:302px;top:318px;width:16px;height:16px"></div>
<span class="t s dis" style="top:318.30px;font-size:15px;line-height:15px;left:323.50px;transform:scaleX(0.9359);transform-origin:0 0;">CopyOnWrite</span>
<div class="cb cbd" style="left:302px;top:356px;width:16px;height:16px"></div>
<svg style="left:302px;top:356px" width="16" height="16" viewBox="0 0 16 16"><path d="M3.5 7.5 L6 10.5 L11.5 4" fill="none" stroke="#808080" stroke-width="2"/></svg>
<span class="t s dis" style="top:356.30px;font-size:15px;line-height:15px;left:323.50px;transform:scaleX(0.8811);transform-origin:0 0;">Fast Scan</span>
<div class="sunken sunkw" style="left:389px;top:352px;width:40px;height:25px"></div>
<span class="t s" style="top:356.80px;font-size:15px;line-height:15px;left:404.50px;transform:scaleX(0.9589);transform-origin:0 0;color:#808080;">4</span>
<svg style="left:433px;top:344px" width="14" height="14" viewBox="0 0 14 14"><circle cx="7" cy="7" r="6" fill="#d4d0c8" stroke="#808080" stroke-width="1"/><path d="M2.8 11.2 A6 6 0 0 0 11.2 2.8" fill="none" stroke="#fff" stroke-width="1"/><path d="M3.5 10.5 A5 5 0 0 1 10.5 3.5" fill="none" stroke="#404040" stroke-width="1"/><circle cx="7" cy="7" r="2.5" fill="#808080"/></svg>
<span class="t s dis" style="top:343.30px;font-size:15px;line-height:15px;left:453.50px;transform:scaleX(0.9070);transform-origin:0 0;">Alignment</span>
<svg style="left:433px;top:369px" width="14" height="14" viewBox="0 0 14 14"><circle cx="7" cy="7" r="6" fill="#d4d0c8" stroke="#808080" stroke-width="1"/><path d="M2.8 11.2 A6 6 0 0 0 11.2 2.8" fill="none" stroke="#fff" stroke-width="1"/><path d="M3.5 10.5 A5 5 0 0 1 10.5 3.5" fill="none" stroke="#404040" stroke-width="1"/></svg>
<span class="t s dis" style="top:368.30px;font-size:15px;line-height:15px;left:453.50px;transform:scaleX(0.8854);transform-origin:0 0;">Last Digits</span>
<div class="cb cbd" style="left:302px;top:398px;width:16px;height:16px"></div>
<span class="t s dis" style="top:398.30px;font-size:15px;line-height:15px;left:323.50px;transform:scaleX(0.8923);transform-origin:0 0;">Pause the game while scanning</span>
<div class="raised" style="left:4px;top:440px;width:158px;height:21px"></div>
<span class="t s" style="top:442.20px;font-size:15px;line-height:15px;left:42.00px;transform:scaleX(0.8997);transform-origin:0 0;">Memory View</span>
<div class="raised" style="left:332px;top:431px;width:35px;height:35px"></div>
<svg style="left:332px;top:431px" width="35" height="35" viewBox="0 0 35 35"><circle cx="17.5" cy="17.5" r="9.5" fill="none" stroke="#e03030" stroke-width="1.6"/><path d="M10.8 24.2 L24.2 10.8" stroke="#e03030" stroke-width="1.6"/></svg>
<div class="raised" style="left:536px;top:440px;width:156px;height:21px"></div>
<span class="t s" style="top:442.20px;font-size:15px;line-height:15px;left:549.00px;transform:scaleX(0.8777);transform-origin:0 0;">Add Address Manually</span>
<div class="sunkw" style="left:4px;top:472px;width:700px;height:50px;border-top:1px solid #808080;border-left:1px solid #e4e1da;box-shadow:inset 0 1px 0 #404040"></div>
<div class="hdr" style="left:6px;top:474px;width:41px;height:22px"></div>
<span class="t s" style="top:477.80px;font-size:15px;line-height:15px;left:8.00px;transform:scaleX(0.9180);transform-origin:0 0;">Active</span>
<div class="hdr" style="left:47px;top:474px;width:160px;height:22px"></div>
<span class="t s" style="top:477.80px;font-size:15px;line-height:15px;left:49.00px;transform:scaleX(0.9063);transform-origin:0 0;">Description</span>
<div class="hdr" style="left:207px;top:474px;width:143px;height:22px"></div>
<span class="t s" style="top:477.80px;font-size:15px;line-height:15px;left:209.00px;transform:scaleX(0.8723);transform-origin:0 0;">Address</span>
<div class="hdr" style="left:350px;top:474px;width:80px;height:22px"></div>
<span class="t s" style="top:477.80px;font-size:15px;line-height:15px;left:352.00px;transform:scaleX(0.9225);transform-origin:0 0;">Type</span>
<div class="hdr" style="left:430px;top:474px;width:282px;height:22px"></div>
<span class="t s" style="top:477.80px;font-size:15px;line-height:15px;left:433.00px;transform:scaleX(0.8858);transform-origin:0 0;">Value</span>
<div style="left:0;top:521px;width:674px;height:1px;background:#fff"></div>
</div>
<div class="clip face" style="left:0;top:542px;width:171px;height:338px">
<div style="left:0;top:0;width:171px;height:1px;background:#d4d0c8"></div>
<div style="left:0;top:1px;width:171px;height:1px;background:#fff"></div>
<div style="left:-200px;top:4px;width:371px;height:24px;background:linear-gradient(90deg,#8c8c8c,#a3a3a3)"></div>
<div style="left:0;top:29px;width:171px;height:2px;background:#4a4a4a"></div>
<span class="t s" style="top:34.47px;font-size:20px;line-height:20px;left:-6.50px;transform:scaleX(1.0180);transform-origin:0 0;">ng (PW=090453)</span>
<span class="t s" style="top:58.47px;font-size:20px;line-height:20px;left:3.80px;transform:scaleX(1.0595);transform-origin:0 0;">the tutorial with Ch</span>
<span class="t s" style="top:130.67px;font-size:20px;line-height:20px;left:1.00px;transform:scaleX(1.0247);transform-origin:0 0;">of this window is th</span>
<span class="t s" style="top:154.77px;font-size:20px;line-height:20px;left:-5.00px;">"</span>
<span class="t s" style="top:154.77px;font-size:20px;line-height:20px;left:14.10px;transform:scaleX(1.0189);transform-origin:0 0;">your health gets d</span>
<div style="left:0;top:220px;width:171px;height:1px;background:#fff"></div>
<span class="t s" style="top:229.07px;font-size:20px;line-height:20px;left:71.50px;transform:scaleX(0.9871);transform-origin:0 0;">Health: 95</span>
<div class="raised" style="left:72px;top:257px;width:86px;height:34px"></div>
<span class="t s" style="top:264.07px;font-size:20px;line-height:20px;left:85.00px;transform:scaleX(1.0383);transform-origin:0 0;">Hit me</span>
<div class="raised" style="left:78px;top:297px;width:75px;height:34px"></div>
<span class="t s dis" style="top:304.07px;font-size:20px;line-height:20px;left:95.00px;transform:scaleX(0.9970);transform-origin:0 0;">Next</span>
<div style="left:0;top:335px;width:171px;height:1px;background:#808080"></div>
<div style="left:0;top:336px;width:171px;height:2px;background:#404040"></div>
</div>
<div class="clip" style="left:0;top:880px;width:171px;height:12px;background:#f4f4f4">
<div style="left:39px;top:0;width:132px;height:13px;background:#fff"></div>
<div style="left:38px;top:0;width:1px;height:13px;background:#d0d0d0"></div>
<svg style="left:4px;top:-7px" width="12" height="10" viewBox="0 0 14 10"><path d="M1 9 L7 3 L13 9" fill="none" stroke="#404040" stroke-width="1.6"/></svg>
<svg style="left:61px;top:-7px" width="18" height="16" viewBox="0 0 18 16"><rect x="1" y="1" width="4" height="13" fill="#303030"/><circle cx="10" cy="8" r="6" fill="#9fd0c8" stroke="#404040"/><circle cx="10" cy="8" r="2" fill="#f0e060"/></svg>
<span class="t s" style="top:-6.62px;font-size:15.5px;line-height:15.5px;left:97.00px;transform:scaleX(0.9325);transform-origin:0 0;color:#101020;">lazarus-2.0</span>
</div>
<div class="clip face" style="left:170px;top:521px;width:1232px;height:371px">
<div style="left:0;top:0;width:1232px;height:1px;background:#d4d0c8"></div>
<div style="left:0;top:0;width:1px;height:370px;background:#d4d0c8"></div>
<div style="left:1px;top:1px;width:1231px;height:1px;background:#fff"></div>
<div style="left:1px;top:1px;width:1px;height:369px;background:#fff"></div>
<div style="left:4px;top:4px;width:1270px;height:24px;background:linear-gradient(90deg,#0a246a 0%,#0a246a 3%,#a6caf0 100%)"></div>
<svg style="left:7px;top:6px" width="20" height="20" viewBox="0 0 20 20"><g transform="translate(10.3 10)"><path d="M6.2 -4.6 A7.7 7.7 0 1 0 6.2 4.6" fill="none" stroke="#071622" stroke-width="4.6" stroke-dasharray="1.9 1.5" transform="scale(1.16)"/><path d="M6.2 -4.6 A7.7 7.7 0 1 0 6.2 4.6" fill="none" stroke="#071622" stroke-width="4.4"/><path d="M6.2 -4.6 A7.7 7.7 0 1 0 6.2 4.6" fill="none" stroke="#17627e" stroke-width="1.7"/><path d="M-4 0 L3.5 0" stroke="#071622" stroke-width="3"/><path d="M-5 0 L2.6 0" stroke="#17627e" stroke-width="1.1"/></g></svg>
<span class="t s b" style="top:7.76px;font-size:18px;line-height:18px;left:30.60px;transform:scaleX(1.3454);transform-origin:0 0;color:#fff;">[#]</span>
<span class="t s b" style="top:7.76px;font-size:18px;line-height:18px;left:66.60px;transform:scaleX(1.0205);transform-origin:0 0;color:#fff;">Lua Engine</span>
<span class="t s b" style="top:7.76px;font-size:18px;line-height:18px;left:172.00px;transform:scaleX(1.3454);transform-origin:0 0;color:#fff;">[#]</span>
<div class="raised" style="left:1194px;top:6px;width:20px;height:19px"></div>
<div style="left:1198px;top:19px;width:8px;height:2px;background:#000"></div>
<div class="raised" style="left:1215px;top:6px;width:20px;height:19px"></div>
<div style="left:1218px;top:10px;width:12px;height:10px;border:1px solid #000;border-top-width:2px"></div>
<span class="t s" style="top:32.11px;font-size:17px;line-height:17px;left:13.50px;transform:scaleX(0.9126);transform-origin:0 0;">File</span>
<span class="t s" style="top:32.11px;font-size:17px;line-height:17px;left:56.50px;transform:scaleX(0.9852);transform-origin:0 0;">View</span>
<div class="grp" style="left:4px;top:62px;width:1300px;height:182px"></div>
<div class="face" style="left:10px;top:55px;width:50px;height:14px"></div>
<span class="t s" style="top:55.98px;font-size:14.2px;line-height:14.2px;left:12.50px;transform:scaleX(1.0557);transform-origin:0 0;">Output</span>
<div class="sunken sunkw" style="left:6px;top:73px;width:1300px;height:170px"></div>
<span class="t s" style="top:78.48px;font-size:14.2px;line-height:14.2px;left:12.50px;transform:scaleX(0.9551);transform-origin:0 0;">Start session 1. Process:</span>
<span class="t s" style="top:78.48px;font-size:14.2px;line-height:14.2px;left:166.50px;transform:scaleX(0.9885);transform-origin:0 0;">000039D4-Tutorial-i386.exe</span>
<span class="t s" style="top:95.48px;font-size:14.2px;line-height:14.2px;left:12.50px;transform:scaleX(1.0056);transform-origin:0 0;">Fri Oct  8 19:29:20 2021</span>
<span class="t s" style="top:95.48px;font-size:14.2px;line-height:14.2px;left:180.00px;transform:scaleX(0.9741);transform-origin:0 0;">First scan. Scan type "Exact Value". Value 100. Value type "4 Bytes". Found 66</span>
<span class="t s" style="top:112.48px;font-size:14.2px;line-height:14.2px;left:12.50px;transform:scaleX(1.0056);transform-origin:0 0;">Fri Oct  8 19:29:51 2021</span>
<span class="t s" style="top:112.48px;font-size:14.2px;line-height:14.2px;left:180.00px;transform:scaleX(0.9769);transform-origin:0 0;">Next scan1. Scan type "Exact Value". Value 100. Found 66</span>
<span class="t s" style="top:129.48px;font-size:14.2px;line-height:14.2px;left:12.50px;transform:scaleX(0.9621);transform-origin:0 0;">memscan_nextScan(getCurrentMemscan(),</span>
<span class="t s" style="top:129.48px;font-size:14.2px;line-height:14.2px;left:285.00px;transform:scaleX(0.9699);transform-origin:0 0;">soExactValue, rtRounded,</span>
<span class="t s" style="top:129.48px;font-size:14.2px;line-height:14.2px;left:449.00px;transform:scaleX(0.9231);transform-origin:0 0;">"95", nil, false, false, false, false, false)</span>
<div class="sunken sunkw" style="left:4px;top:250px;width:1175px;height:130px"></div>
<div class="face" style="left:6px;top:252px;width:67px;height:107px"></div>
<div style="left:59px;top:252px;width:1px;height:107px;background:#808080"></div>
<div style="left:75px;top:252px;width:1082px;height:20px;background:#e0e0e0"></div>
<div style="left:875px;top:252px;width:1px;height:107px;background:#c0c0c0"></div>
<span class="t m" style="top:255.32px;font-size:16.667px;line-height:16.667px;left:46.20px;">1</span>
<span class="t m b" style="top:255.02px;font-size:16.667px;line-height:16.667px;left:75.00px;color:#0a82c8;">memscan_nextScan</span>
<span class="t m b" style="top:255.02px;font-size:16.667px;line-height:16.667px;left:235.00px;color:#000;">(</span>
<span class="t m b" style="top:255.02px;font-size:16.667px;line-height:16.667px;left:245.00px;color:#0a82c8;">getCurrentMemscan</span>
<span class="t m" style="top:255.02px;font-size:16.667px;line-height:16.667px;left:415.00px;color:#000;">(), soExactValue, rtRounded, </span>
<span class="t m" style="top:255.02px;font-size:16.667px;line-height:16.667px;left:705.00px;color:#d02020;">"95"</span>
<span class="t m" style="top:255.02px;font-size:16.667px;line-height:16.667px;left:745.00px;color:#000;">, </span>
<span class="t m b" style="top:255.02px;font-size:16.667px;line-height:16.667px;left:765.00px;color:#0000e0;">nil</span>
<span class="t m" style="top:255.02px;font-size:16.667px;line-height:16.667px;left:795.00px;color:#000;">, </span>
<span class="t m b" style="top:255.02px;font-size:16.667px;line-height:16.667px;left:815.00px;color:#0000e0;">false</span>
<span class="t m" style="top:255.02px;font-size:16.667px;line-height:16.667px;left:865.00px;color:#000;">, </span>
<span class="t m b" style="top:255.02px;font-size:16.667px;line-height:16.667px;left:885.00px;color:#0000e0;">false</span>
<span class="t m" style="top:255.02px;font-size:16.667px;line-height:16.667px;left:935.00px;color:#000;">, </span>
<span class="t m b" style="top:255.02px;font-size:16.667px;line-height:16.667px;left:955.00px;color:#0000e0;">false</span>
<span class="t m" style="top:255.02px;font-size:16.667px;line-height:16.667px;left:1005.00px;color:#000;">, </span>
<span class="t m b" style="top:255.02px;font-size:16.667px;line-height:16.667px;left:1025.00px;color:#0000e0;">false</span>
<span class="t m" style="top:255.02px;font-size:16.667px;line-height:16.667px;left:1075.00px;color:#000;">, </span>
<span class="t m b" style="top:255.02px;font-size:16.667px;line-height:16.667px;left:1095.00px;color:#0000e0;">false</span>
<span class="t m b" style="top:255.02px;font-size:16.667px;line-height:16.667px;left:1145.00px;color:#000;">)</span>
<div style="left:1154px;top:253px;width:2px;height:18px;background:#000"></div>
<div style="left:1157px;top:252px;width:20px;height:107px;background-image:repeating-conic-gradient(#fff 0 25%,#d4d0c8 0 50%);background-size:2px 2px;"></div>
<div class="raised" style="left:1157px;top:252px;width:20px;height:20px"></div>
<svg style="left:1157px;top:252px" width="20" height="20" viewBox="0 0 20 20"><path d="M6 13 L15 13 L10.5 8.5 Z" fill="#fff"/><path d="M5 12 L14 12 L9.5 7.5 Z" fill="#808080"/></svg>
<div class="raised" style="left:1157px;top:339px;width:20px;height:20px"></div>
<svg style="left:1157px;top:339px" width="20" height="20" viewBox="0 0 20 20"><path d="M6 9 L15 9 L10.5 13.5 Z" fill="#fff"/><path d="M5 8 L14 8 L9.5 12.5 Z" fill="#808080"/></svg>
<div style="left:6px;top:359px;width:1151px;height:20px;background-image:repeating-conic-gradient(#fff 0 25%,#d4d0c8 0 50%);background-size:2px 2px;"></div>
<div class="raised" style="left:7px;top:359px;width:19px;height:20px"></div>
<svg style="left:7px;top:359px" width="19" height="20" viewBox="0 0 19 20"><path d="M12 6 L12 15 L7.5 10.5 Z" fill="#fff"/><path d="M11 5 L11 14 L6.5 9.5 Z" fill="#808080"/></svg>
<div class="raised" style="left:1138px;top:359px;width:19px;height:20px"></div>
<svg style="left:1138px;top:359px" width="19" height="20" viewBox="0 0 19 20"><path d="M9 6 L9 15 L13.5 10.5 Z" fill="#fff"/><path d="M8 5 L8 14 L12.5 9.5 Z" fill="#808080"/></svg>
<div class="face" style="left:1157px;top:359px;width:20px;height:20px"></div>
<div class="raised" style="left:1182px;top:270px;width:80px;height:91px"></div>
<span class="t s" style="top:307.48px;font-size:14.2px;line-height:14.2px;left:1195.40px;transform:scaleX(0.9745);transform-origin:0 0;">Execute</span>
</div>
</body></html>
